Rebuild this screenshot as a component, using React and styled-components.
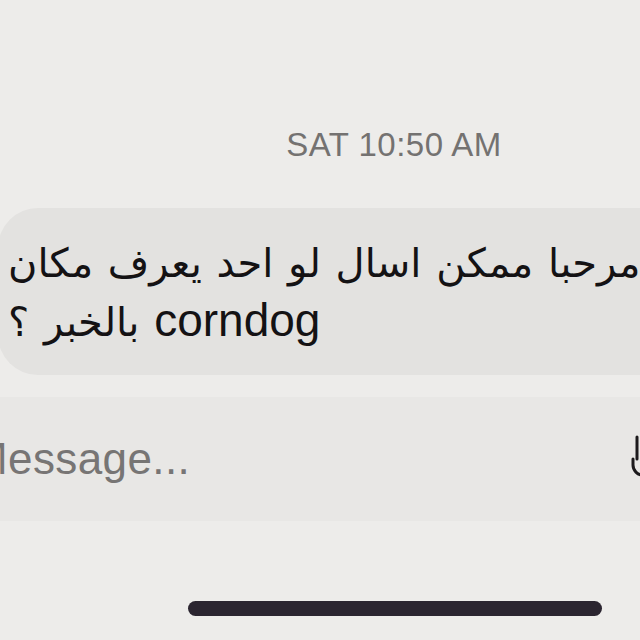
import React from 'react';
import styled, { createGlobalStyle } from 'styled-components';

const GlobalStyle = createGlobalStyle`
  html, body {
    margin: 0;
    padding: 0;
    background: #edecea;
  }
  body {
    font-family: "Liberation Sans", "DejaVu Sans", sans-serif;
  }
`;

const Screen = styled.div`
  width: 640px;
  height: 640px;
  overflow: hidden;
  background: #edecea;
  display: flex;
  flex-direction: column;
`;

const Stamp = styled.div`
  margin-top: 126px;
  padding-left: 148px;
  text-align: center;
  font-size: 33px;
  line-height: 38px;
  color: #747271;
  letter-spacing: 0.5px;
`;

const Bubble = styled.div`
  margin-top: 44px;
  margin-left: -2px;
  width: 720px;
  height: 167px;
  box-sizing: border-box;
  padding: 27px 0 0 10px;
  background: #e3e2e0;
  border-radius: 40px;
`;

const Message = styled.p`
  margin: 0;
  width: 700px;
  direction: rtl;
  text-align: left;
  font-family: "DejaVu Sans", sans-serif;
  font-size: 40px;
  line-height: 57px;
  word-spacing: 2px;
  color: #141214;
  white-space: nowrap;
`;

const Latin = styled.span`
  font-family: "Liberation Sans", sans-serif;
  font-size: 46px;
  word-spacing: 0;
`;

const InputBar = styled.div`
  margin-top: 22px;
  margin-left: -40px;
  width: 720px;
  height: 124px;
  background: #e8e7e5;
  display: flex;
  align-items: center;
  justify-content: space-between;
  padding: 0 36px 0 11px;
  box-sizing: border-box;
`;

const Placeholder = styled.div`
  font-size: 44px;
  letter-spacing: 0.4px;
  color: #777574;
`;

const IconSlot = styled.div`
  width: 14px;
  height: 60px;
  display: flex;
  align-items: center;
`;

const HomeBar = styled.div`
  margin: 80px 0 0 188px;
  width: 414px;
  height: 15px;
  border-radius: 8px;
  background: #2b2530;
`;

const App = () => (
  <Screen>
    <GlobalStyle />
    <Stamp>SAT 10:50 AM</Stamp>
    <Bubble>
      <Message dir="rtl">
        مرحبا ممكن اسال لو احد يعرف مكان
        <br />
        <Latin>corndog</Latin> بالخبر ؟
      </Message>
    </Bubble>
    <InputBar>
      <Placeholder>Message...</Placeholder>
      <IconSlot>
        <svg width="14" height="60" viewBox="0 0 14 60">
          <path d="M7 8 V30 M3 30 V36 a10 10 0 0 0 10 10" fill="none" stroke="#1c1a1c" strokeWidth="3" strokeLinecap="round" />
        </svg>
      </IconSlot>
    </InputBar>
    <HomeBar />
  </Screen>
);

export default App;
